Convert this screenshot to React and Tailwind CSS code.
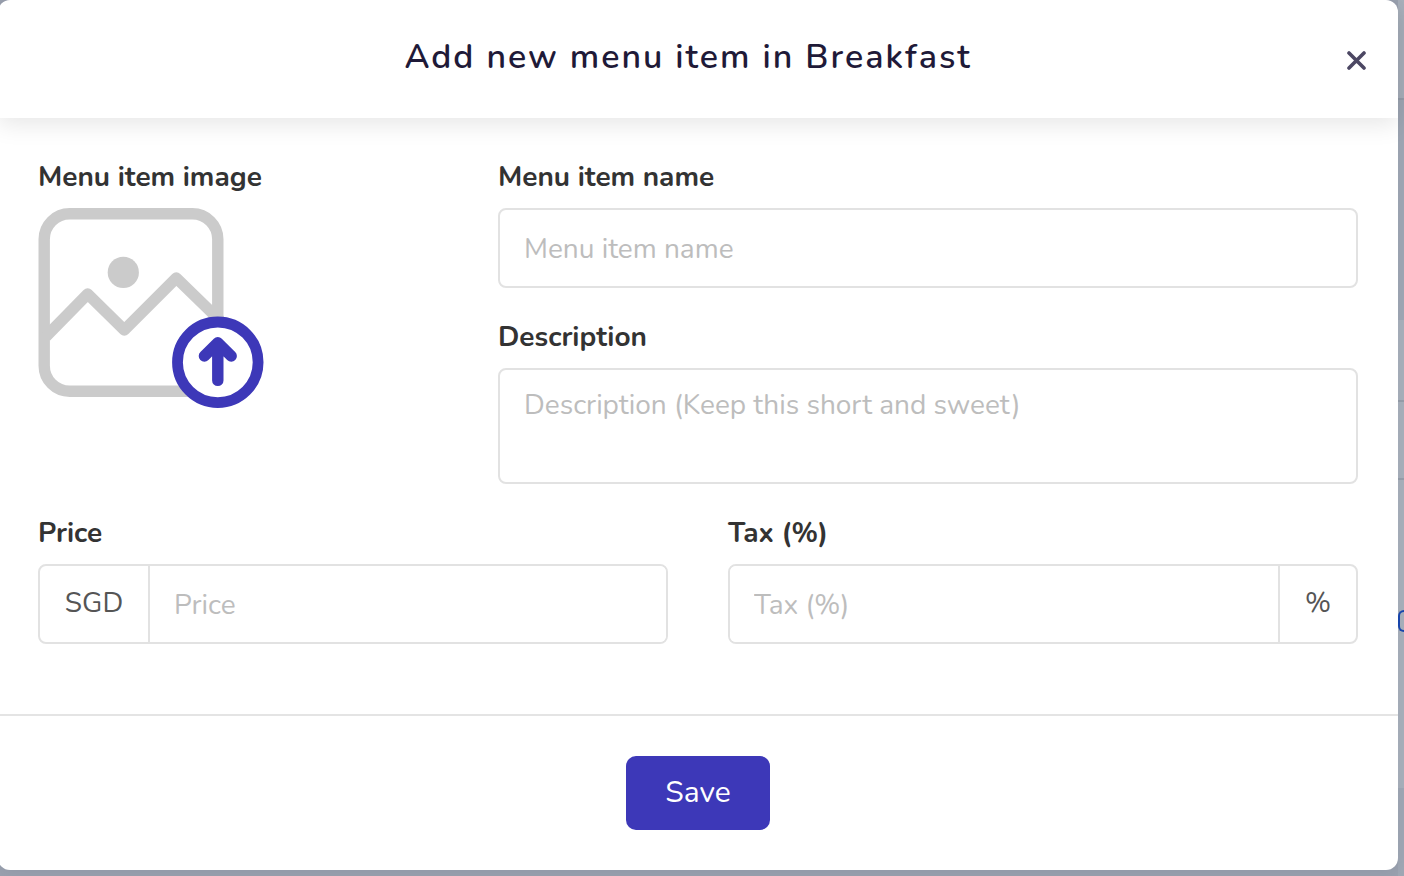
const inputStyles =
    'block w-full min-w-0 bg-white px-6 text-[28px] leading-[38px] text-[#333333] placeholder:text-[#bdbdbd] outline-none';

const UploadIcon = () => (
    <svg width="226" height="200" viewBox="0 0 226 200" fill="none" aria-hidden="true">
        <g stroke="#cbcbcb" strokeWidth="11.4" strokeLinejoin="round">
            <rect x="6.2" y="5.7" width="173.6" height="177.6" rx="25.5" />
            <path d="M8 128.5 49.7 86 86.3 122 138.3 70 182 112.5" />
        </g>
        <circle cx="85.3" cy="64.4" r="15.6" fill="#cbcbcb" />
        <circle cx="179.8" cy="154.3" r="40.3" fill="#fff" stroke="#3d38b8" strokeWidth="10.8" />
        <path
            d="M179.8 172.4V134.8M166.4 148 179.8 134.8 193.2 148"
            stroke="#3d38b8"
            strokeWidth="11.4"
            strokeLinecap="round"
            strokeLinejoin="round"
        />
    </svg>
);

const CloseIcon = () => (
    <svg width="20" height="20" viewBox="0 0 20 20" fill="none" aria-hidden="true">
        <path d="M3 3 18 18M18 3 3 18" stroke="#4c4763" strokeWidth="3.6" strokeLinecap="round" />
    </svg>
);

const Label = ({ htmlFor, children }) => (
    <label htmlFor={htmlFor} className="mb-3 block text-[28px] font-bold leading-[38px] text-[#333333]">
        {children}
    </label>
);

// Slice of the page that stays visible behind the dialog
const Backdrop = () => (
    <div aria-hidden="true" className="flex w-1.5 shrink-0 flex-col bg-[#a9b1bc]">
        <div className="h-[100px] border-b-2 border-[#979fab]" />
        <div className="h-[220px] bg-[#a0a8b5]" />
        <div className="h-[82px] border-b-2 border-[#979fab]" />
        <div className="h-[78px] border-b-2 border-[#979fab]" />
        <div className="h-[130px]" />
        <div className="h-[22px] rounded-l-md border-2 border-r-0 border-[#1746b0]" />
        <div className="h-[156px]" />
        <div className="flex-1 bg-[#a0a8b5]" />
    </div>
);

const App = () => {
    return (
        <div className="flex min-h-screen items-stretch overflow-hidden bg-[#9ba2b0] font-['Nunito','Lato',sans-serif]">
            <div
                role="dialog"
                aria-labelledby="dialog-title"
                className="relative z-10 -ml-0.5 mb-1.5 flex min-w-0 flex-1 flex-col rounded-xl bg-white shadow-[0_4px_16px_rgba(60,65,90,0.1)]"
            >
                <header className="flex h-[118px] items-center rounded-t-xl pl-10 pr-6 pt-0.5 shadow-[0_6px_24px_rgba(0,0,0,0.1)]">
                    <h1
                        id="dialog-title"
                        className="flex-1 pb-1.5 text-center text-[34px] font-semibold leading-[46px] tracking-[2px] text-[#1f1a38]"
                    >
                        Add new menu item in Breakfast
                    </h1>
                    <button type="button" aria-label="Close" className="flex size-9 items-center justify-center">
                        <CloseIcon />
                    </button>
                </header>

                <form className="flex flex-1 flex-col">
                    <div className="grid flex-1 grid-cols-12 content-start gap-x-[60px] gap-y-[30px] px-10 pb-[70px] pt-10">
                        <div className="col-span-4">
                            <Label htmlFor="image">Menu item image</Label>
                            <button type="button" id="image" className="block">
                                <UploadIcon />
                            </button>
                        </div>

                        <div className="col-span-8 flex flex-col gap-[30px]">
                            <div>
                                <Label htmlFor="name">Menu item name</Label>
                                <input
                                    id="name"
                                    type="text"
                                    placeholder="Menu item name"
                                    className={`${inputStyles} h-20 rounded-lg border-2 border-[#e2e2e2] pt-0.5`}
                                />
                            </div>
                            <div>
                                <Label htmlFor="description">Description</Label>
                                <textarea
                                    id="description"
                                    placeholder="Description (Keep this short and sweet)"
                                    className={`${inputStyles} h-[116px] resize-none rounded-lg border-2 border-[#e2e2e2] py-4`}
                                />
                            </div>
                        </div>

                        <div className="col-span-6">
                            <Label htmlFor="price">Price</Label>
                            <div className="flex h-20 overflow-hidden rounded-lg border-2 border-[#e2e2e2]">
                                <span className="flex w-[110px] shrink-0 items-center justify-center border-r-2 border-[#e2e2e2] pb-0.5 text-[28px] text-[#555555]">
                                    SGD
                                </span>
                                <input id="price" type="text" placeholder="Price" className={`${inputStyles} pt-0.5`} />
                            </div>
                        </div>

                        <div className="col-span-6">
                            <Label htmlFor="tax">Tax (%)</Label>
                            <div className="flex h-20 overflow-hidden rounded-lg border-2 border-[#e2e2e2]">
                                <input id="tax" type="text" placeholder="Tax (%)" className={`${inputStyles} pt-0.5`} />
                                <span className="flex w-[78px] shrink-0 items-center justify-center border-l-2 border-[#e2e2e2] pb-0.5 text-[28px] text-[#555555]">
                                    %
                                </span>
                            </div>
                        </div>
                    </div>

                    <footer className="flex justify-center border-t-2 border-[#e4e4e4] py-10">
                        <button
                            type="submit"
                            className="h-[74px] w-36 rounded-[10px] bg-[#3d38b8] text-[30px] leading-10 text-white"
                        >
                            Save
                        </button>
                    </footer>
                </form>
            </div>
            <Backdrop />
        </div>
    );
};

export default App;
